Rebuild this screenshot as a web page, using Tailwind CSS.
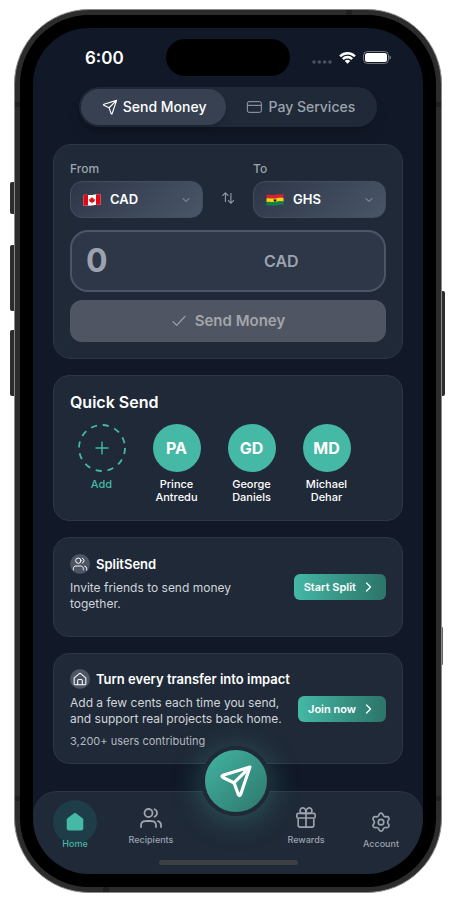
<!DOCTYPE html>
<html lang="en">
<head>
<meta charset="utf-8">
<meta name="viewport" content="width=device-width, initial-scale=1">
<title>Send Money</title>
<script src="https://cdn.jsdelivr.net/npm/@tailwindcss/browser@4"></script>
</head>
<body class="bg-white font-['Inter',sans-serif] text-white">
<svg class="hidden" aria-hidden="true">
  <symbol id="send" viewBox="0 0 24 24" fill="none" stroke="currentColor" stroke-linecap="round" stroke-linejoin="round"><path d="M20.800 3.200 3.800 8.400c-.9.300-.9 1 0 1.400l6.200 3c.5.200.8.500 1 1l2.500 6.800c.3.900 1.100.9 1.400 0L20.800 3.200ZM20.800 3.200 10.800 13"/></symbol>
  <symbol id="users" viewBox="0 0 24 24" fill="none" stroke="currentColor" stroke-linecap="round" stroke-linejoin="round"><path d="M22 21v-2a4 4 0 0 0-3-3.87M15.5 3.29a4 4 0 0 1 0 7.42M17 21c0-1.86 0-2.8-.3-3.53a4 4 0 0 0-2.17-2.17C13.8 15 12.86 15 11 15H8c-1.86 0-2.8 0-3.53.3a4 4 0 0 0-2.17 2.17C2 18.2 2 19.14 2 21"/><circle cx="9.5" cy="7" r="4"/></symbol>
  <symbol id="chevron" viewBox="0 0 24 24" fill="none" stroke="currentColor" stroke-linecap="round" stroke-linejoin="round"><path d="m6 9 6 6 6-6"/></symbol>
  <symbol id="chevron-right" viewBox="0 0 24 24" fill="none" stroke="currentColor" stroke-linecap="round" stroke-linejoin="round"><path d="m9 4 8 8-8 8"/></symbol>
</svg>

<div class="relative ml-3.5 mr-[15px] mt-[9px] rounded-[75px] border border-[#8a8a8a] bg-[#2c2c2c] p-[5px]">
  <!-- side buttons -->
  <div class="absolute -left-[5px] top-[172px] h-8 w-1 rounded-l-xs bg-[#2c2c2c]"></div>
  <div class="absolute -left-[5px] top-[235px] h-[66px] w-1 rounded-l-xs bg-[#2c2c2c]"></div>
  <div class="absolute -left-[5px] top-80 h-[66px] w-1 rounded-l-xs bg-[#2c2c2c]"></div>
  <div class="absolute -right-1 top-[281px] h-[105px] w-[3px] rounded-r-xs bg-[#2c2c2c]"></div>
  <div class="absolute -right-0.5 top-[617px] h-[38px] w-px rounded-r-xs bg-[#6b6265]"></div>
  <!-- antenna bands -->
  <div class="absolute left-0 right-0 top-[92px] h-[5px] bg-[#202020]"></div>
  <div class="absolute bottom-[91px] left-0 right-0 h-[5px] bg-[#202020]"></div>
  <div class="absolute right-[89px] top-0 h-[5px] w-1.5 bg-[#202020]"></div>
  <div class="absolute bottom-0 left-[88px] h-[5px] w-1.5 bg-[#202020]"></div>

  <div class="relative rounded-[69px] bg-black p-[13px]">
    <main class="relative overflow-hidden rounded-[56px] bg-[#111827]">
      <header class="flex items-center justify-between pl-[52px] pr-8 pt-[11px]">
        <time class="w-[81px] text-[17px] leading-5 font-semibold">6:00</time>
        <div class="h-[37px] w-[124px] rounded-full bg-black"></div>
        <div class="flex w-[101px] items-center justify-end gap-[7px]">
          <svg class="mt-2 h-1 w-5" viewBox="0 0 20 4" fill="#4b5160"><circle cx="2" cy="2" r="1.8"/><circle cx="7.3" cy="2" r="1.8"/><circle cx="12.6" cy="2" r="1.8"/><circle cx="18" cy="2" r="1.8"/></svg>
          <svg class="h-3 w-[17px]" viewBox="0 0 17 12" fill="#fff"><path d="M8.5 2.5c2.4 0 4.6.9 6.3 2.5.1.1.3.1.5 0l1.2-1.2c.2-.2.2-.4 0-.6a11.6 11.6 0 0 0-16 0c-.2.2-.2.4 0 .6L1.700 5c.2.1.4.1.5 0A9.200 9.200 0 0 1 8.500 2.500Zm0 3.900c1.300 0 2.600.500 3.500 1.400.2.1.4.1.5 0l1.300-1.300c.1-.200.1-.400 0-.600a7.800 7.800 0 0 0-10.600 0c-.1.200-.1.400 0 .600l1.300 1.300c.1.100.3.100.5 0a5.100 5.100 0 0 1 3.500-1.400Zm2.500 2.900c.200-.100.200-.400 0-.500a4 4 0 0 0-5 0c-.200.100-.200.400 0 .5l2.200 2.200c.2.200.4.200.6 0L11 9.300Z"/></svg>
          <svg class="h-[13px] w-7" viewBox="0 0 28 13"><rect x=".5" y=".5" width="25" height="12" rx="4" fill="none" stroke="#fff" stroke-opacity=".4"/><rect x="2" y="2" width="22" height="9" rx="2.500" fill="#fff"/><path d="M26.500 4.500v4c.8-.3 1.400-1.100 1.400-2s-.6-1.700-1.400-2Z" fill="#fff" fill-opacity=".5"/></svg>
        </div>
      </header>

      <div class="mt-[11px] flex justify-center">
        <div role="tablist" class="flex rounded-full bg-[#1f2937] p-0.5 shadow-lg">
          <button role="tab" aria-selected="true" class="flex h-9 items-center gap-1 rounded-full bg-[#374151] px-5 text-sm font-medium shadow-md"><svg class="size-[18px]" stroke-width="1.500"><use href="#send"/></svg>Send Money</button>
          <button role="tab" aria-selected="false" class="flex h-9 items-center gap-1.5 rounded-full px-5 text-sm font-medium text-[#9ca3af]"><svg class="size-4" viewBox="0 0 24 24" fill="none" stroke="currentColor" stroke-width="1.500"><rect x="2" y="4" width="21" height="16" rx="2.500"/><path d="M2 9.500h21"/></svg>Pay Services</button>
        </div>
      </div>

      <div class="flex flex-col gap-4 px-5 pt-[17px]">
        <form class="rounded-[18px] border border-[#2c3746] bg-[#1f2937] p-4">
          <div class="flex items-end justify-between">
            <div class="w-[133px]">
              <label for="from" class="block pb-1 text-xs leading-4 font-medium text-[#9ca3af]">From</label>
              <div class="relative flex h-[37px] items-center rounded-xl border border-[#434d5d] bg-linear-[135deg] from-[#2d3748] to-[#4a5568]">
                <svg class="pointer-events-none absolute left-3 h-3 w-[18px]" viewBox="0 0 18 12"><path d="M.500 1C4 .2 6 1.500 9 1s5-1.200 8.500-.5V11c-3.500-.7-5.500 0-8.500.5S4 11 .500 11.800Z" fill="#fff"/><path d="M.500 1C2.500.5 3.600.7 5 .900v10.600c-1.400-.1-2.500-.1-4.500.3ZM13 .4c1.500-.2 2.800-.2 4.500.1V11c-1.700-.3-3-.3-4.500 0Z" fill="#e30613"/><path d="m9 2.800.8 1.500.8-.3-.1 1.500 1.500-.4-.4 1.500.4.300-2.200 1.500H9.200v1.300h-.4V8.400H8.200L6 6.900l.4-.3L6 5.100l1.500.4L7.400 4l.8.3Z" fill="#e30613"/></svg>
                <select id="from" class="w-full appearance-none bg-transparent pl-[39px] text-[13px] font-semibold outline-none"><option>CAD</option></select>
                <svg class="pointer-events-none absolute right-2.5 size-3 text-[#a3aab6]" stroke-width="1.800"><use href="#chevron"/></svg>
              </div>
            </div>
            <button type="button" aria-label="Swap currencies" class="mb-[13px] text-[#9ca3af]"><svg class="size-3.5" viewBox="0 0 24 24" fill="none" stroke="currentColor" stroke-width="1.800" stroke-linecap="round" stroke-linejoin="round"><path d="M7.500 18V3m0 0L3 7.500M7.500 3 12 7.500M17 4v17m0 0 4.500-4.500M17 21 12.500 16.500"/></svg></button>
            <div class="w-[133px]">
              <label for="to" class="block pb-1 text-xs leading-4 font-medium text-[#9ca3af]">To</label>
              <div class="relative flex h-[37px] items-center rounded-xl border border-[#434d5d] bg-linear-[135deg] from-[#2d3748] to-[#4a5568]">
                <svg class="pointer-events-none absolute left-3 h-3 w-[18px]" viewBox="0 0 18 12"><path d="M.500 1C4 .2 6 1.500 9 1s5-1.200 8.500-.5v3.700C14 3.500 12 4.200 9 4.700S4 4 .500 4.800Z" fill="#d8222c"/><path d="M.500 4.500C4 3.700 6 5 9 4.500s5-1.200 8.500-.5v3.700C14 7 12 7.700 9 8.200S4 7.500.500 8.300Z" fill="#fcd116"/><path d="M.500 8C4 7.200 6 8.500 9 8s5-1.200 8.500-.5V11c-3.500-.7-5.500 0-8.500.5S4 11 .500 11.800Z" fill="#11804a"/><path d="m9 4.500.5 1.300H11l-1.100.9.4 1.400L9 7.300l-1.300.8.4-1.400L7 5.800h1.500Z" fill="#111"/></svg>
                <select id="to" class="w-full appearance-none bg-transparent pl-[39px] text-[13px] font-semibold outline-none"><option>GHS</option></select>
                <svg class="pointer-events-none absolute right-2.5 size-3 text-[#a3aab6]" stroke-width="1.800"><use href="#chevron"/></svg>
              </div>
            </div>
          </div>
          <div class="mt-3 flex h-[62px] items-center rounded-[18px] border-2 border-[#4a5568] bg-[#2d3748] pl-3.5">
            <input id="amount" aria-label="Amount" inputmode="decimal" placeholder="0" class="min-w-0 flex-1 bg-transparent text-[32px] leading-10 font-bold outline-none placeholder:text-[#9ca3af]">
            <label for="amount" class="w-[120px] text-base font-semibold text-[#9ca3af]">CAD</label>
          </div>
          <button disabled class="mt-2 flex h-[42px] w-full items-center justify-center gap-2 rounded-xl bg-[#4f5563] text-[15px] font-semibold text-[#a3a5a9]"><svg class="size-4" viewBox="0 0 24 24" fill="none" stroke="currentColor" stroke-width="1.800" stroke-linecap="round" stroke-linejoin="round"><path d="m3 13 5.500 5.500L21 5"/></svg>Send Money</button>
        </form>

        <section class="rounded-2xl border border-[#2c3746] bg-[#1f2937] p-4">
          <h2 class="text-base leading-5 font-semibold">Quick Send</h2>
          <ul class="mt-3 flex gap-3 text-center text-[11px] leading-[13px] font-medium">
            <li class="w-[63px]"><button class="flex w-full flex-col items-center gap-1.5 text-[#45b8a6]"><svg class="size-12" viewBox="0 0 48 48" fill="none" stroke="currentColor" stroke-width="1.800"><circle cx="24" cy="24" r="23" stroke-dasharray="6.200 5.843"/><path d="M24 17.500v13M17.500 24h13" stroke-width="1.400"/></svg>Add</button></li>
            <li class="w-[63px]"><button class="flex w-full flex-col items-center gap-1.5"><span class="flex size-12 items-center justify-center rounded-full bg-[#45b8a6] text-base font-bold">PA</span><span>Prince<br>Antredu</span></button></li>
            <li class="w-[63px]"><button class="flex w-full flex-col items-center gap-1.5"><span class="flex size-12 items-center justify-center rounded-full bg-[#45b8a6] text-base font-bold">GD</span><span>George<br>Daniels</span></button></li>
            <li class="w-[63px]"><button class="flex w-full flex-col items-center gap-1.5"><span class="flex size-12 items-center justify-center rounded-full bg-[#45b8a6] text-base font-bold">MD</span><span>Michael<br>Dehar</span></button></li>
          </ul>
        </section>

        <section class="flex items-start justify-between rounded-2xl border border-[#2c3746] bg-[#1f2937] px-4 pt-4 pb-6">
          <div>
            <h2 class="flex items-center gap-1.5 text-[13px] leading-5 font-semibold"><span class="flex size-5 items-center justify-center rounded-full bg-[#4b5563]"><svg class="size-4" stroke-width="1.500"><use href="#users"/></svg></span>SplitSend</h2>
            <p class="mt-1.5 text-xs leading-4 text-[#d1d5db]">Invite friends to send money<br>together.</p>
          </div>
          <button class="mt-2 flex h-[26px] items-center gap-1.5 self-center rounded-md bg-linear-to-r from-[#45b8a6] to-[#2b7468] pl-2.5 pr-3 text-[11px] font-semibold">Start Split<svg class="size-3" stroke-width="2.500"><use href="#chevron-right"/></svg></button>
        </section>

        <section class="flex items-start justify-between rounded-2xl border border-[#2c3746] bg-[#1f2937] px-4 pt-[15px] pb-3.5">
          <div>
            <h2 class="flex items-center gap-1.5 text-[13px] leading-5 font-semibold whitespace-nowrap"><span class="flex size-5 items-center justify-center rounded-full bg-[#4b5563]"><svg class="size-3.5" viewBox="0 0 24 24" fill="none" stroke="currentColor" stroke-width="1.800" stroke-linejoin="round"><path d="M8 22v-7a2 2 0 0 1 2-2h4a2 2 0 0 1 2 2v7M2 10 12 2l10 8v10a2 2 0 0 1-2 2H4a2 2 0 0 1-2-2Z"/></svg></span>Turn every transfer into impact</h2>
            <p class="mt-1.5 text-xs leading-4 text-[#d1d5db] whitespace-nowrap">Add a few cents each time you send,<br>and support real projects back home.</p>
            <p class="mt-1.5 text-[11px] leading-4 text-[#b4b9c1]">3,200+ users contributing</p>
          </div>
          <button class="flex h-[26px] items-center gap-1.5 self-center rounded-md bg-linear-to-r from-[#45b8a6] to-[#2b7468] pl-2.5 pr-3 text-[11px] font-semibold whitespace-nowrap">Join now<svg class="size-3" stroke-width="2.500"><use href="#chevron-right"/></svg></button>
        </section>
      </div>

      <nav class="relative mt-[27px] rounded-t-3xl border-t border-[#2c3746] bg-[#1f2937] px-5 pt-2 pb-[9px]">
        <div class="flex justify-between text-[9px] leading-3 font-medium text-[#9ca3af]">
          <div class="flex items-start gap-8">
            <a href="#home" aria-current="page" class="flex w-11 flex-col items-center text-[#45b8a6]"><span class="flex size-11 items-center justify-center rounded-full bg-[#1f3d49]"><svg class="size-5" viewBox="0 0 20 20" fill="currentColor"><path d="M8.700 1.400c.8-.6 1.800-.6 2.600 0l6 4.700c.7.5 1 1.200 1 2v8.400c0 1-.8 1.900-1.900 1.900H3.600c-1.100 0-1.900-.9-1.900-1.900V8.100c0-.8.300-1.500 1-2Z"/></svg></span><span class="-mt-1.5">Home</span></a>
            <a href="#recipients" class="flex w-11 flex-col items-center"><span class="flex size-9 items-center justify-center"><svg class="size-6" stroke-width="1.800"><use href="#users"/></svg></span><span class="-mt-0.5">Recipients</span></a>
          </div>
          <div class="flex items-start gap-[31px]">
            <a href="#rewards" class="flex w-11 flex-col items-center"><span class="flex size-9 items-center justify-center"><svg class="size-[22px]" viewBox="0 0 24 24" fill="none" stroke="currentColor" stroke-width="1.800" stroke-linejoin="round"><path d="M12 7v15M12 7H8.500A3 3 0 1 1 11 2.300C11.800 3.300 12 7 12 7Zm0 0h3.500A3 3 0 1 0 13 2.300C12.200 3.300 12 7 12 7ZM3.500 12.500V20a2 2 0 0 0 2 2h13a2 2 0 0 0 2-2v-7.500"/><rect x="2" y="7" width="20" height="5" rx="1.500"/></svg></span><span class="-mt-0.5">Rewards</span></a>
            <a href="#account" class="flex w-11 flex-col items-center"><span class="flex size-11 items-center justify-center"><svg class="size-[22px]" viewBox="0 0 24 24" fill="none" stroke="currentColor" stroke-width="1.800" stroke-linecap="round" stroke-linejoin="round"><path d="m9.400 19.400.6 1.300a2.200 2.200 0 0 0 4 0l.6-1.300a2.400 2.400 0 0 1 2.400-1.400l1.400.1a2.200 2.200 0 0 0 2-3.400l-.8-1.100a2.400 2.400 0 0 1 0-2.800l.8-1.200a2.200 2.200 0 0 0-2-3.400L17 6.400A2.400 2.400 0 0 1 14.600 5L14 3.600a2.200 2.200 0 0 0-4 0L9.400 5A2.400 2.400 0 0 1 7 6.400l-1.400-.2a2.200 2.200 0 0 0-2 3.400l.8 1.200a2.400 2.400 0 0 1 0 2.800l-.8 1.100a2.200 2.200 0 0 0 2 3.400L7 18a2.400 2.400 0 0 1 2.400 1.400Z"/><circle cx="12" cy="12.200" r="3"/></svg></span><span class="-mt-1.5">Account</span></a>
          </div>
        </div>
        <div class="mx-auto mt-2.5 h-[5px] w-[139px] rounded-full bg-[#3c4043]"></div>
        <button aria-label="Send money" class="absolute -top-[46px] left-[calc(50%+8px)] flex size-[70px] -translate-x-1/2 items-center justify-center rounded-full border-4 border-[#1f2937] bg-linear-to-br from-[#45b8a6] to-[#2b7468] bg-origin-border shadow-[0_4px_30px_rgba(69,184,166,0.35)]"><svg class="size-[38px]" stroke-width="2"><use href="#send"/></svg></button>
      </nav>
    </main>
  </div>
</div>
</body>
</html>
